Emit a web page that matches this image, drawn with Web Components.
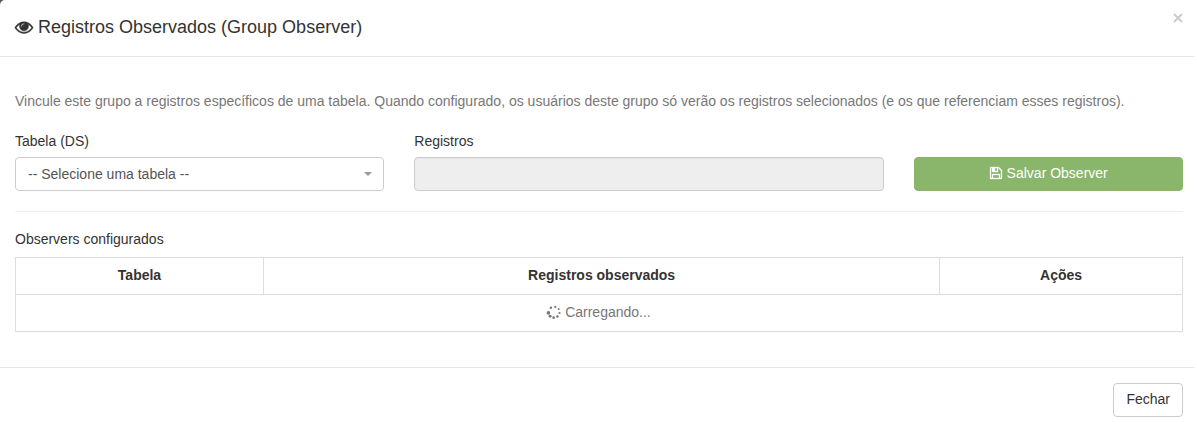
<!DOCTYPE html>
<html lang="pt-BR">
<head>
<meta charset="utf-8">
<title>Registros Observados</title>
<style>
body { margin: 0; background: #fff; color: #333; font: 14px/20px "Liberation Sans", Arial, sans-serif; }
</style>
</head>
<body>
<observer-dialog>
  <dialog-title slot="header">Registros Observados (Group Observer)</dialog-title>
  <observer-form></observer-form>
  <observer-table></observer-table>
  <action-button slot="footer">Fechar</action-button>
</observer-dialog>

<script>
const define = (name, html, setup) => {
  const template = document.createElement('template');
  template.innerHTML = '<style>*{box-sizing:border-box}</style>' + html;
  customElements.define(name, class extends HTMLElement {
    constructor() {
      super();
      this.attachShadow({ mode: 'open' }).append(template.content.cloneNode(true));
    }
    connectedCallback() { if (setup) setup(this, this.shadowRoot); }
  });
};

const ICONS = {
  eye: '<path stroke="currentColor" stroke-width="50" d="M1664 960q-152-236-381-353 61 104 61 225 0 185-131.500 316.500t-316.500 131.500-316.500-131.500-131.500-316.500q0-121 61-225-229 117-381 353 133 205 333.500 326.500t434.500 121.500 434.500-121.500 333.500-326.500zm-720-384q0-20-14-34t-34-14q-125 0-214.500 89.500t-89.500 214.500q0 20 14 34t34 14 34-14 14-34q0-86 61-147t147-61q20 0 34-14t14-34zm848 384q0 34-20 69-140 230-376.500 368.500t-499.500 138.500-499.500-139-376.500-368q-20-35-20-69t20-69q140-229 376.500-368t499.500-139 499.500 139 376.500 368q20 35 20 69z"/>',
  save: '<path stroke="currentColor" stroke-width="40" d="M512 1536h768v-384h-768v384zm896 0h128v-896q0-14-10-38.500t-20-34.500l-281-281q-10-10-34-20t-39-10v416q0 40-28 68t-68 28h-576q-40 0-68-28t-28-68v-416h-128v1280h128v-416q0-40 28-68t68-28h832q40 0 68 28t28 68v416zm-384-928v-320q0-13-9.500-22.500t-22.500-9.500h-192q-13 0-22.500 9.500t-9.500 22.500v320q0 13 9.500 22.500t22.500 9.500h192q13 0 22.500-9.500t9.500-22.500zm640 32v928q0 40-28 68t-68 28h-1344q-40 0-68-28t-28-68v-1344q0-40 28-68t68-28h928q40 0 88 20t84 48l280 280q28 28 48 76t20 88z"/>',
  spinner: '<circle cx="180" cy="1010" r="230"/><circle cx="400" cy="1440" r="190"/><circle cx="850" cy="1620" r="175"/><circle cx="1330" cy="1460" r="160"/><circle cx="1600" cy="1020" r="140"/><circle cx="1490" cy="520" r="130"/><circle cx="1060" cy="240" r="140"/><circle cx="500" cy="350" r="155"/>'
};

define('ui-icon', `
<style>
  :host { display: inline-block; width: 14px; height: 14px; vertical-align: -2px; }
  svg { display: block; width: 100%; height: 100%; fill: currentColor; overflow: visible; }
</style>
<svg viewBox="0 0 1792 1792" aria-hidden="true"></svg>`, (host, root) => {
  root.querySelector('svg').innerHTML = ICONS[host.getAttribute('name')];
});

define('dialog-title', `
<style>
  :host { display: block; }
  h4 { margin: 0; font-size: 18px; line-height: 26px; font-weight: 400; }
  ui-icon { width: 18px; height: 18px; vertical-align: -3px; }
</style>
<h4><ui-icon name="eye"></ui-icon> <slot></slot></h4>`);

define('action-button', `
<style>
  :host { display: block; }
  button { display: block; width: 100%; height: 34px; margin: 0; padding: 0 12px 2px; border: 1px solid #ccc;
    border-radius: 4px; background: #fff; color: #333; font: inherit; cursor: pointer; }
  :host([primary]) button { background: #89b66a; border-color: #89b66a; color: #fff; }
</style>
<button type="button"><slot></slot></button>`);

define('form-field', `
<style>
  :host { display: block; }
  label { display: block; margin-bottom: 6px; }
  .control { display: block; width: 100%; height: 34px; margin: 0; padding: 0 12px; border: 1px solid #ccc;
    border-radius: 4px; font: inherit; color: #555; background: #fff; }
  select { appearance: none; }
  .control:disabled { background: #eee; box-shadow: inset 0 1px 1px #e4e4e4; }
  .box { position: relative; }
  .box.menu::after { content: ""; position: absolute; right: 12px; top: 15px; pointer-events: none;
    border: 4px solid transparent; border-top-color: #999; border-bottom: 0; }
</style>
<label for="control"></label>
<div class="box"></div>`, (host, root) => {
  root.querySelector('label').textContent = host.getAttribute('label');
  const option = host.getAttribute('option');
  const box = root.querySelector('.box');
  const control = document.createElement(option ? 'select' : 'input');
  control.id = 'control';
  control.className = 'control';
  if (option) {
    control.add(new Option(option, ''));
    box.classList.add('menu');
  } else {
    control.type = 'text';
    control.disabled = true;
  }
  box.replaceChildren(control);
});

define('observer-form', `
<style>
  :host { display: block; padding-bottom: 20px; border-bottom: 1px solid #eee; }
  p { margin: 0 0 20px; color: #777; }
  form { display: grid; grid-template-columns: repeat(12, minmax(0, 1fr)); column-gap: 30px; align-items: end; }
  .table { grid-column: span 4; }
  .records { grid-column: span 5; }
  action-button { grid-column: span 3; }
</style>
<p>Vincule este grupo a registros específicos de uma tabela. Quando configurado, os usuários deste grupo só verão os registros selecionados (e os que referenciam esses registros).</p>
<form>
  <form-field class="table" label="Tabela (DS)" option="-- Selecione uma tabela --"></form-field>
  <form-field class="records" label="Registros"></form-field>
  <action-button primary><ui-icon name="save"></ui-icon> Salvar Observer</action-button>
</form>`);

define('observer-table', `
<style>
  :host { display: block; padding-top: 17px; }
  table { width: 100%; table-layout: fixed; border-collapse: collapse; }
  caption { text-align: left; margin-bottom: 8px; }
  th, td { height: 37px; padding: 7px 8px 9px; border: 1px solid #ddd; text-align: center; line-height: 20px; }
  td { color: #777; }
  th:first-child { width: 21.25%; }
  th:last-child { width: 20.8%; }
</style>
<table>
  <caption>Observers configurados</caption>
  <thead><tr><th scope="col">Tabela</th><th scope="col">Registros observados</th><th scope="col">Ações</th></tr></thead>
  <tbody><tr><td colspan="3"><ui-icon name="spinner"></ui-icon> Carregando...</td></tr></tbody>
</table>`);

define('observer-dialog', `
<style>
  :host { display: block; background: linear-gradient(135deg, #555 8px, #fff 8px); }
  section { background: #fff; border-top-left-radius: 5px; }
  header, footer { display: flex; margin-right: 3px; padding: 15px 11px 15px 15px; }
  header { justify-content: space-between; align-items: flex-start; padding-top: 14px; padding-bottom: 16px; border-bottom: 1px solid #e5e5e5; }
  footer { justify-content: flex-end; border-top: 1px solid #e5e5e5; }
  main { padding: 34px 14px 35px 15px; }
  .close { display: block; margin: -1px 0 0; padding: 0; border: 0; background: none; color: #ccc; width: 10px; height: 10px; cursor: pointer; }
  .close svg { display: block; width: 10px; height: 10px; }
</style>
<section role="dialog" aria-label="Registros Observados">
  <header>
    <slot name="header"></slot>
    <button class="close" type="button" aria-label="Fechar"><svg viewBox="0 0 10 10" aria-hidden="true"><path d="M1 1l8 8M9 1l-8 8" fill="none" stroke="currentColor" stroke-width="2"/></svg></button>
  </header>
  <main><slot></slot></main>
  <footer><slot name="footer"></slot></footer>
</section>`);
</script>
</body>
</html>
